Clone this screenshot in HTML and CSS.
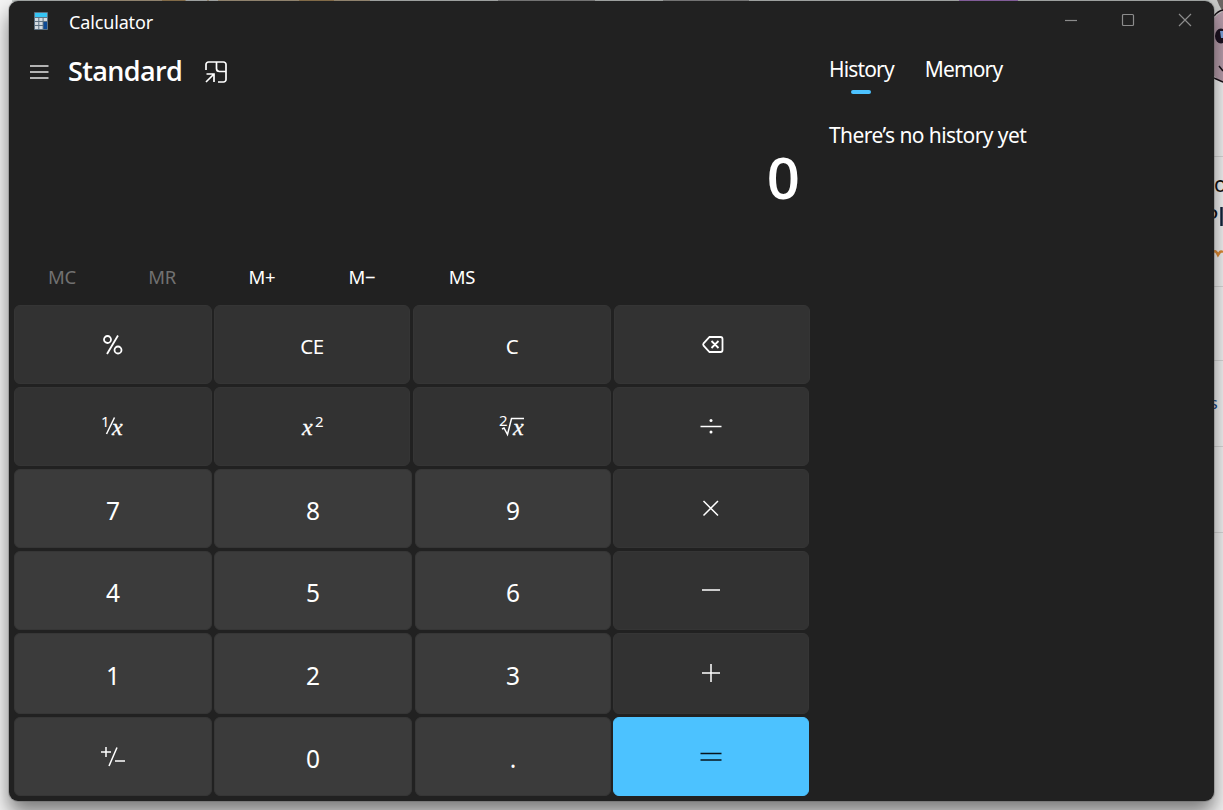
FILE: index.html
```html
<!DOCTYPE html>
<html lang="en">
<head>
<meta charset="utf-8">
<title>Calculator</title>
<link rel="stylesheet" href="styles.css">
</head>
<body>
<div class="desktop">
  <svg class="backdrop" width="1223" height="810" viewBox="0 0 1223 810" aria-hidden="true">
    <rect width="1223" height="810" fill="#f4f4f4"/>
    <rect x="12" width="1202" height="2" fill="#c4cac8"/>
    <path d="M80 .5h106M207 .5h2M218 .5h152" stroke="#b09c7d"/>
    <path d="M162 .5h23M299 .5h35" stroke="#9a7844"/>
    <path d="M498 .5h97M663 .5h86" stroke="#858585"/>
    <path d="M959 .5h59" stroke="#9a63bd"/>
    <path d="M1210 0h13v24h-8z" fill="#c9cac8"/>
    <path d="M1217 0h6v12l-4-7z" fill="#6d6764"/>
    <ellipse cx="1240" cy="47" rx="38" ry="40" fill="#b79dab"/>
    <path d="M1214 16q4-5 9-6M1219 66l4 5M1214 78l9 4" stroke="#160e14" stroke-width="1.500" fill="none"/>
    <ellipse cx="1221" cy="36" rx="6" ry="7.500" fill="#1b1120"/>
    <path d="M1220 31h3v7h-2z" fill="#7fa4dc"/>
    <path d="M1214 156.500h9M1214 286.500h9M1214 360.500h9M1214 446.500h9M1214 532.500h9" stroke="#d8d8d8"/>
    <path d="M1213 252q2-2 4 1l1 2 2-3q1-1 3 0" stroke="#e08b34" stroke-width="2.500" fill="none"/>
    <text x="1214" y="192" font-size="21" fill="#111">o</text>
    <text x="1205" y="225" font-size="22" fill="#111">P</text>
    <path d="M1221.500 207v19" stroke="#14243c" stroke-width="2.500"/>
    <text x="1210" y="409" font-size="16" fill="#0e3f7c">s</text>
  </svg>

  <main class="window">
    <header class="titlebar">
      <svg class="app-icon" width="14" height="18" viewBox="0 0 14 18">
        <rect width="14" height="18" rx=".8" fill="#5d7182"/>
        <rect x="1" y="1" width="12" height="4" fill="#35c4f4"/>
        <path d="M1 6h3.300v3H1zM5.300 6h3.300v3H5.300zM9.600 6H13v3H9.600zM1 10h3.300v3H1zM5.300 10h3.300v3H5.300zM1 14h3.300v3H1zM5.300 14h3.300v3H5.300z" fill="#d3dae0"/>
        <path d="M9.600 10H13v7H9.600z" fill="#0d4a96"/>
      </svg>
      <span class="title">Calculator</span>
      <div class="controls">
        <svg width="12" height="12" viewBox="0 0 12 12"><path d="M0 6.500h12"/></svg>
        <svg width="12" height="12" viewBox="0 0 12 12"><rect x=".5" y=".5" width="11" height="11" rx="1"/></svg>
        <svg width="12" height="12" viewBox="0 0 12 12"><path d="M0 0l12 12M12 0L0 12"/></svg>
      </div>
    </header>

    <div class="body">
      <section class="calc">
        <div class="mode">
          <svg class="menu" width="19" height="14" viewBox="0 0 19 14"><path d="M0 1h18.500M0 7h18.500M0 13h18.500"/></svg>
          <h1 class="mode-name">Standard</h1>
          <svg class="ontop" width="22" height="22" viewBox="0 0 22 22"><path d="M1 9V3.500A2.500 2.500 0 0 1 3.500 1h15A2.500 2.500 0 0 1 21 3.500v15a2.500 2.500 0 0 1-2.500 2.500H13M11.500 1v6.500a3 3 0 0 0 3 3H21M1.500 13H9v8M9 13l-8 8"/></svg>
        </div>
        <div class="display">0</div>
        <div class="memory">
          <span class="off">MC</span><span class="off">MR</span><span>M+</span><span>M−</span><span>MS</span>
        </div>
        <div class="keys">
          <div class="row first">
            <button class="key"><svg class="heavy" width="22" height="22" viewBox="0 0 22 22"><circle cx="5.500" cy="5.500" r="3.500"/><circle cx="16" cy="16" r="3.500"/><path d="M16 1.500L5 20"/></svg></button>
            <button class="key word"><span>CE</span></button>
            <button class="key word"><span>C</span></button>
            <button class="key"><svg class="heavy nudge" width="22" height="18" viewBox="0 0 22 18"><path d="M7.500 1H18.500a2 2 0 0 1 2 2v11a2 2 0 0 1-2 2H7.500L1.600 9.700a2 2 0 0 1 0-2.400zM9.500 5l7 7M16.500 5l-7 7"/></svg></button>
          </div>
          <div class="row second">
            <button class="key"><svg width="26" height="24" viewBox="0 0 26 24"><text x="1" y="11.500" font-size="15">1</text><path d="M14.500 2.500L6.500 19"/><text class="var" x="12" y="19.500" font-size="24">x</text></svg></button>
            <button class="key"><svg width="26" height="24" viewBox="0 0 26 24"><text class="var" x="3" y="19.500" font-size="24">x</text><text x="16" y="11.500" font-size="15">2</text></svg></button>
            <button class="key"><svg width="26" height="24" viewBox="0 0 26 24"><text x="0" y="11" font-size="15">2</text><path d="M3 14l2-1 3.500 6.500L12.500 3.500H25"/><text class="var" x="14" y="19.500" font-size="24">x</text></svg></button>
            <button class="key"><svg class="lift" width="22" height="18" viewBox="0 0 22 18"><path d="M.5 9.500h21"/><circle class="dot" cx="11" cy="3.500" r="1.500"/><circle class="dot" cx="11" cy="15" r="1.500"/></svg></button>
          </div>
          <div class="row">
            <button class="key num"><span>7</span></button><button class="key num"><span>8</span></button><button class="key num"><span>9</span></button>
            <button class="key"><svg class="lift" width="18" height="18" viewBox="0 0 18 18"><path d="M1.500 2l14.500 14.500M16 2L1.500 16.500"/></svg></button>
          </div>
          <div class="row">
            <button class="key num"><span>4</span></button><button class="key num"><span>5</span></button><button class="key num"><span>6</span></button>
            <button class="key"><svg class="lift" width="18" height="18" viewBox="0 0 18 18"><path d="M0 9h18"/></svg></button>
          </div>
          <div class="row">
            <button class="key num"><span>1</span></button><button class="key num"><span>2</span></button><button class="key num"><span>3</span></button>
            <button class="key"><svg class="lift" width="18" height="18" viewBox="0 0 18 18"><path d="M0 9h18M9 0v18"/></svg></button>
          </div>
          <div class="row">
            <button class="key num"><svg width="24" height="22" viewBox="0 0 24 22"><path d="M0 6h10M5 1v10M16 1.500L8 20M14 15h10"/></svg></button><button class="key num"><span>0</span></button><button class="key num"><span>.</span></button>
            <button class="key equals"><svg width="22" height="10" viewBox="0 0 22 10"><path d="M.5 1.500h21M.5 8h21"/></svg></button>
          </div>
        </div>
      </section>

      <aside class="side">
        <nav class="tabs"><span class="tab active">History</span><span class="tab">Memory</span></nav>
        <p class="empty">There’s no history yet</p>
      </aside>
    </div>
  </main>
</div>
</body>
</html>
```
FILE: styles.css
```css
* { box-sizing: border-box; }
body { margin: 0; font-family: "Noto Sans", "Open Sans", sans-serif; color: #fff; }
.desktop { position: relative; width: 1223px; height: 810px; padding: 1px 9px 9px; overflow: hidden; }
.backdrop { position: absolute; left: 0; top: 0; }
.window {
  position: relative; width: 1205px; height: 800px; background: #212121; border-radius: 9px;
  box-shadow: 0 0 0 1px rgba(90, 90, 90, .3), 0 12px 20px rgba(0, 0, 0, .5);
}
svg { display: block; flex: none; overflow: visible; }
.titlebar { display: flex; height: 40px; padding-left: 25px; }
.app-icon { margin-top: 11px; }
.title { margin-left: 21px; font-size: 18px; line-height: 42px; letter-spacing: -.15px; }
.controls { display: flex; gap: 45px; margin: 13px 23px 0 auto; }
.controls svg { fill: none; stroke: #8c8c8c; stroke-width: 1.200; }
.body { display: flex; }
.calc { width: 801px; padding-left: 5px; }
.mode { display: flex; align-items: center; height: 62px; padding-left: 16px; }
.menu { stroke: #e4e4e4; stroke-width: 1.400; }
.mode-name { margin: -3px 0 0 19px; font: 600 27px/40px "Open Sans", "Noto Sans", sans-serif; letter-spacing: -.65px; }
.ontop { margin-left: 23px; fill: none; stroke: #fff; stroke-width: 1.700; }
.display { height: 158px; padding: 34px 10px 0 0; text-align: right; font: 600 58px/80px "Open Sans", "Noto Sans", sans-serif; }
.memory { display: flex; height: 44px; margin-left: -2px; }
.memory span { width: 100px; text-align: center; font-size: 18.500px; line-height: 32px; letter-spacing: -.3px; }
.memory .off { color: #717171; }
.keys { display: grid; grid-template-rows: 79px 79px 79px 79px 81px 79px; row-gap: 3px; }
.row { display: grid; grid-template-columns: 198px 2px 198px 3px 196px 2px 196px; }
.row.first { grid-template-columns: 198px 2px 196px 3px 198px 3px 196px; }
.row.second { grid-template-columns: 198px 2px 196px 3px 198px 2px 196px; }
.key:nth-child(1) { grid-column: 1; }
.key:nth-child(2) { grid-column: 3; }
.key:nth-child(3) { grid-column: 5; }
.key:nth-child(4) { grid-column: 7; }
.key {
  display: flex; align-items: center; justify-content: center; padding: 0; border: 1px solid #353535;
  border-radius: 6px; background: #323232; color: #fff; font: 24.500px/34px "Noto Sans", sans-serif;
}
.key.num { background: #3b3b3b; border-color: #363636; }
.key.num span { padding-top: 5px; }
.key.word { font-size: 20.500px; letter-spacing: -.4px; }
.key.word span { padding-top: 2px; }
.key svg { fill: none; stroke: #fff; stroke-width: 1.500; }
.key svg.heavy { stroke-width: 1.800; }
.key .lift { margin-bottom: 2px; }
.key .nudge { margin-left: 2px; }
.key svg text, .key .dot { fill: #fff; stroke: none; }
.key svg .var { font-family: "Liberation Serif", serif; font-style: italic; stroke: #fff; stroke-width: .3; }
.key.equals { background: #4cc2ff; border-color: #4cc2ff; }
.key.equals svg { stroke: #06141c; }
.side { padding-left: 19px; }
.tabs { display: flex; gap: 31px; height: 64px; }
.tab { position: relative; height: 54px; font-size: 21px; line-height: 56px; letter-spacing: -.85px; }
.active::after {
  content: ""; position: absolute; left: 50%; bottom: 1px; width: 20px; height: 4px; margin-left: -10px;
  border-radius: 2px; background: #4cc2ff;
}
.empty { margin: 13px 0 0; font-size: 21px; line-height: 34px; letter-spacing: -.57px; }
```
